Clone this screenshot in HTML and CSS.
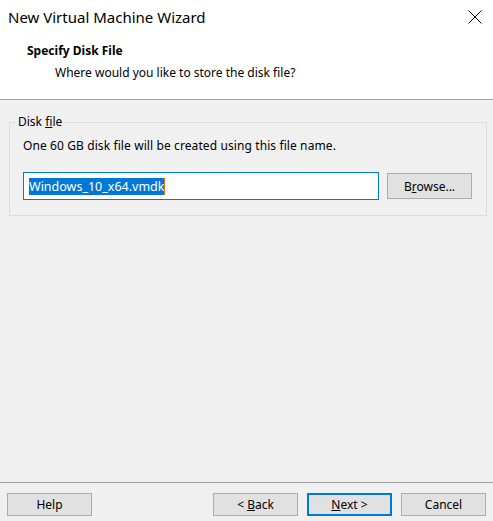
FILE: index.html
```html
<!DOCTYPE html>
<html>
<head>
<meta charset="utf-8">
<title>New Virtual Machine Wizard</title>
<link rel="stylesheet" href="styles.css">
</head>
<body>
<div class="window">
  <div class="header">
    <div class="titlebar">
      <span class="title">New Virtual Machine Wizard</span>
      <svg class="close" width="14" height="14" viewBox="0 0 14 14"><path d="M0.5 0.5 L13.5 13.5 M13.5 0.5 L0.5 13.5" stroke="#000" stroke-width="1" fill="none"/></svg>
    </div>
    <div class="heading">
      <div class="heading-title">Specify Disk File</div>
      <div class="heading-sub">Where would you like to store the disk file?</div>
    </div>
  </div>
  <div class="content">
    <fieldset class="group">
      <legend class="group-label">Disk <u>f</u>ile</legend>
      <div class="desc">One 60 GB disk file will be created using this file name.</div>
      <div class="file-row">
        <div class="textbox"><span class="selected">Windows_10_x64.vmdk</span><span class="caret"></span></div>
        <button class="btn browse">B<u>r</u>owse...</button>
      </div>
    </fieldset>
  </div>
  <div class="footer">
    <button class="btn">Help</button>
    <div class="spacer"></div>
    <button class="btn">&lt; <u>B</u>ack</button>
    <button class="btn primary"><u>N</u>ext &gt;</button>
    <button class="btn">Cancel</button>
  </div>
</div>
</body>
</html>
```

FILE: styles.css
```css
* { box-sizing: border-box; }
html, body { margin: 0; padding: 0; }
body {
  width: 493px;
  height: 521px;
  overflow: hidden;
  font-family: "Noto Sans", "Open Sans", sans-serif;
  font-size: 12px;
  color: #000;
}
.window {
  width: 493px;
  height: 521px;
  display: flex;
  flex-direction: column;
  background: #f0f0f0;
}
.header {
  background: #fff;
  height: 100px;
  border-bottom: 1px solid #a0a0a0;
  flex: none;
}
.titlebar {
  height: 34px;
  display: flex;
  align-items: center;
  justify-content: space-between;
  padding: 0 11px 0 8px;
}
.title {
  font-size: 15px;
  color: #000;
}
.close { display: block; }
.heading { padding: 9px 0 0 27px; }
.heading-title {
  font-weight: bold;
  line-height: 16px;
}
.heading-sub {
  padding-left: 28px;
  margin-top: 6px;
  line-height: 16px;
}
.content {
  flex: 1;
  padding: 14px 6px 0 9px;
}
.group {
  margin: 0;
  border: 1px solid #dcdcdc;
  padding: 8px 14px 15px 13px;
  min-width: 0;
}
.group-label {
  padding: 0 2px;
  margin-left: -7px;
  line-height: 16px;
}
.desc {
  line-height: 16px;
  letter-spacing: 0.1px;
}
.file-row {
  display: flex;
  align-items: center;
  gap: 8px;
  margin-top: 18px;
}
.textbox {
  flex: 1;
  height: 28px;
  background: #fff;
  border: 1px solid #0078d7;
  display: flex;
  align-items: center;
  padding-left: 5px;
}
.selected {
  background: #0078d7;
  color: #fff;
  font-size: 12.5px;
  line-height: 17px;
}
.caret {
  width: 1px;
  height: 17px;
  background: #e36c09;
}
.btn {
  font-family: inherit;
  font-size: 12px;
  color: #000;
  background: #e1e1e1;
  border: 1px solid #adadad;
  width: 85px;
  height: 23px;
  padding: 0;
  margin: 0;
}
.browse { height: 26px; }
.footer {
  flex: none;
  height: 39px;
  border-top: 1px solid #a0a0a0;
  display: flex;
  align-items: flex-start;
  padding: 10px 7px 0 7px;
  gap: 9px;
}
.spacer { flex: 1; }
.btn.primary { border: 2px solid #0078d7; }
```
